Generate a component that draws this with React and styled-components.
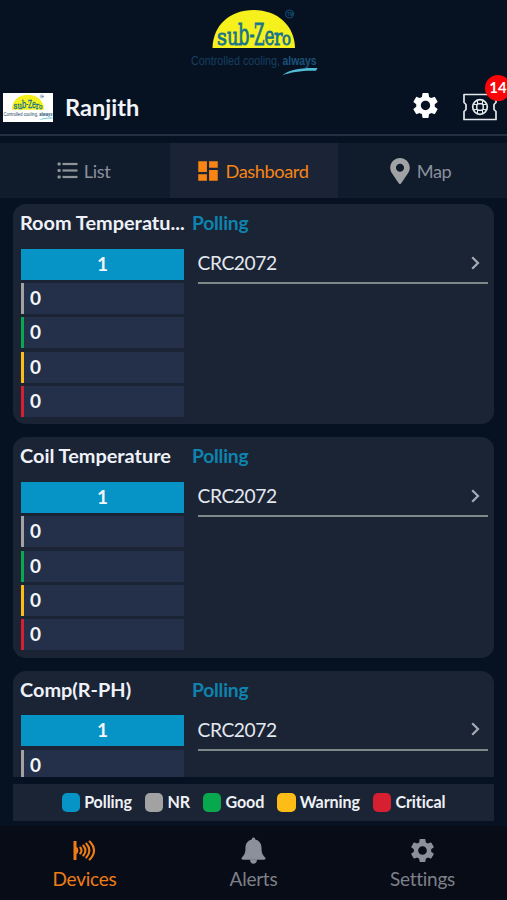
import React from 'react';
import styled, { createGlobalStyle } from 'styled-components';
import { MdSettings, MdDashboard } from 'react-icons/md';
import { FaMapMarkerAlt } from 'react-icons/fa';

const GlobalStyle = createGlobalStyle`
  * {
    box-sizing: border-box;
  }
  body {
    margin: 0;
    background: #061222;
    font-family: 'Lato', sans-serif;
    font-variant-ligatures: none;
  }
`

const Screen = styled.div`
  width: 100%;
  height: 900px;
  display: flex;
  flex-direction: column;
  overflow: hidden;
  background: #061222;
`

const BrandBar = styled.div`
  height: 79px;
  padding: 8px 0 0 190px;
`

const Header = styled.header`
  height: 57px;
  display: flex;
  align-items: center;
  padding: 1px 9px 0 3px;
  border-bottom: 2px solid #233041;
`

const Thumb = styled.div`
  width: 50px;
  height: 29px;
  padding-top: 1px;
  background: #ffffff;
`

const UserName = styled.div`
  flex: 1;
  margin-left: 12px;
  font-size: 23.6px;
  font-weight: 700;
  line-height: 28px;
  color: #f1f4f8;
`

const HeaderGear = styled(MdSettings)`
  width: 31px;
  height: 31px;
  margin: -3px 21px 0 0;
  color: #ffffff;
`

const TicketButton = styled.div`
  position: relative;
  width: 36px;
  height: 28px;
`

const Badge = styled.div`
  position: absolute;
  top: -18px;
  left: 23px;
  width: 26px;
  height: 26px;
  border-radius: 50%;
  background: #fb0509;
  color: #ffffff;
  font-size: 15px;
  font-weight: 700;
  line-height: 25px;
  text-align: center;
`

const Tabs = styled.div`
  display: grid;
  grid-template-columns: 170px 168px 1fr;
  height: 55px;
  margin-top: 7px;
  background: #101b2b;
`

const Tab = styled.div`
  display: flex;
  align-items: center;
  justify-content: center;
  gap: ${props => props.$gap || 6}px;
  padding-right: ${props => props.$shift || 0}px;
  font-size: 18.2px;
  letter-spacing: -0.4px;
  color: ${props => (props.$active ? '#f88513' : '#8b909b')};
  background: ${props => (props.$active ? '#1a2436' : 'transparent')};
`

const CardList = styled.div`
  height: 573px;
  margin-top: 6px;
  padding: 0 13px;
  display: flex;
  flex-direction: column;
  gap: 13px;
  overflow: hidden;
`

const Card = styled.section`
  flex: none;
  height: 220.3px;
  display: grid;
  grid-template-columns: 163px 1fr;
  column-gap: 9px;
  padding: 6px 6px 0 8px;
  border-radius: 13px;
  background: #1b2435;
`

const Title = styled.div`
  height: 26px;
  margin-left: -1px;
  font-size: 19.9px;
  font-weight: 700;
  line-height: 25px;
  white-space: nowrap;
  color: #eef2f8;
`

const GroupName = styled(Title)`
  font-size: 19.2px;
  letter-spacing: -0.2px;
  color: #0d83ae;
`

const Rows = styled.div`
  display: grid;
  grid-auto-rows: 31px;
  row-gap: 3.3px;
  margin-top: 12.8px;
`

const Row = styled.div`
  padding-left: ${props => (props.$main ? 0 : '6px')};
  border-left: ${props => (props.$main ? 'none' : `3px solid ${props.$color}`)};
  background: ${props => (props.$main ? props.$color : '#243049')};
  color: #f3f6fa;
  font-size: 19px;
  font-weight: 700;
  line-height: 30.4px;
  text-align: ${props => (props.$main ? 'center' : 'left')};
`

const Device = styled.div`
  height: 41px;
  margin: 7px 0 0 4.5px;
  padding: 0 8px 0 0;
  display: flex;
  align-items: center;
  justify-content: space-between;
  border-bottom: 2px solid #7d8889;
  color: #e3e8ee;
  font-size: 19.2px;
  letter-spacing: -0.4px;
`

const Legend = styled.div`
  height: 37px;
  margin: 7px 13px 0;
  padding-bottom: 1px;
  display: flex;
  align-items: center;
  justify-content: center;
  gap: 13px;
  background: #1b2435;
`

const LegendItem = styled.div`
  display: flex;
  align-items: center;
  gap: 4px;
  font-size: 16.1px;
  line-height: 18px;
  font-weight: 700;
  letter-spacing: -0.1px;
  color: #eef2f7;
`

const Swatch = styled.span`
  width: 18.5px;
  height: 19px;
  border-radius: 5px;
  background: ${props => props.$color};
`

const BottomNav = styled.nav`
  flex: 1;
  margin-top: 5px;
  display: grid;
  grid-template-columns: repeat(3, 1fr);
  background: #080c16;
`

const NavItem = styled.div`
  display: flex;
  flex-direction: column;
  align-items: center;
  padding-top: 8px;
  font-size: 19px;
  letter-spacing: -0.25px;
  color: ${props => (props.$active ? '#ee7d17' : '#7d8089')};
`

const NavIcon = styled.div`
  height: 33px;
  display: flex;
  align-items: center;
  color: ${props => (props.$active ? '#ee7d17' : '#8b909b')};
`

const NavLabel = styled.div`
  line-height: 24px;
`

const LogoSvg = styled.svg`
  display: block;
  overflow: visible;
`

const wordmark = [
  { char: 's', x: 27, y: 37.3, size: 22, width: 10 },
  { char: 'u', x: 37, y: 37.3, size: 25, width: 11.5 },
  { char: 'b', x: 48, y: 36.5, size: 29, width: 11.5 },
  { char: '-', x: 59.5, y: 35, size: 28, width: 5 },
  { char: 'Z', x: 64, y: 36.5, size: 30, width: 10.5 },
  { char: 'e', x: 74.5, y: 37, size: 26, width: 10 },
  { char: 'r', x: 84, y: 37.3, size: 22, width: 8.5 },
  { char: 'o', x: 92, y: 37.3, size: 19, width: 9 },
];

const Logo = ({ width }) => (
  <LogoSvg width={width} viewBox="0 0 128 70">
    <path d="M22.5 40C23 17 40 2 63.500 2S104.500 17 105 40Z" fill="#f6f01c" />
    <g fill="#16748a" stroke="#16748a" strokeWidth="0.800" fontFamily="'DejaVu Serif', serif">
      {wordmark.map(l => (
        <text key={l.char} x={l.x} y={l.y} fontSize={l.size} textLength={l.width} lengthAdjust="spacingAndGlyphs">{l.char}</text>
      ))}
    </g>
    <circle cx="99.500" cy="6" r="4" fill="none" stroke="#12507a" strokeWidth="1" />
    <text x="97" y="7.800" fontSize="4.500" fontFamily="'Liberation Sans', sans-serif" fontWeight="700" fill="#12507a">TM</text>
    <g fill="#173f60" fontFamily="'Liberation Sans', sans-serif" fontSize="12.500">
      <text x="1" y="57" textLength="89" lengthAdjust="spacingAndGlyphs">Controlled cooling,</text>
      <text x="92.500" y="57" fontWeight="700" textLength="34" lengthAdjust="spacingAndGlyphs" fill="#1a5179">always</text>
    </g>
    <path d="M92 67.500C99 61.500 111 59.500 127.500 60L126 62.800C112 62.500 101 64 92 67.500Z" fill="#52bcd6" />
  </LogoSvg>
);

const ListIcon = () => (
  <svg width="21" height="18" viewBox="0 0 21 18" fill="#8f9498">
    {[2, 8.5, 15].map(y => (
      <g key={y}>
        <rect x="0.500" y={y - 1.6} width="3.200" height="3.200" rx="1" />
        <rect x="5.500" y={y - 1.1} width="15" height="2.200" />
      </g>
    ))}
  </svg>
);

const TicketIcon = () => (
  <svg width="36" height="28" viewBox="0 0 36 28" fill="none" stroke="#e4e7ec" strokeWidth="1.700">
    <path d="M2 1.500H34V9.500L32 11.500V16.500L34 18.500V26.500H2V18.500L4 16.500V11.500L2 9.500Z" strokeLinejoin="round" />
    <circle cx="18" cy="14" r="7.300" />
    <rect x="14.800" y="10.800" width="6.400" height="6.400" rx="2" strokeWidth="1.500" />
    <path d="M15.500 7.200V11.200M20.500 7.200V11.200M15.500 16.800V20.800M20.500 16.800V20.800M11.200 11.500H15.200M11.200 16.500H15.200M20.800 11.500H24.800M20.800 16.500H24.800" strokeWidth="1.100" />
  </svg>
);

const Chevron = () => (
  <svg width="9" height="14" viewBox="0 0 9 14" fill="none" stroke="#a5acb5" strokeWidth="2.200">
    <path d="M1.200 1.200L7 7L1.200 12.800" />
  </svg>
);

const DevicesIcon = () => (
  <svg width="23" height="21" viewBox="0 0 23 21" fill="none" stroke="#ee7d17" strokeWidth="2.100" strokeLinecap="round">
    <path d="M0.500 1H3.500V7C6 8 6 13 3.500 14V20H0.500Z" fill="#ee7d17" stroke="none" />
    <path d="M7.300 7.500Q9.700 10.500 7.300 13.500M10.300 5.500Q14.600 10.500 10.300 15.500M13.300 3.500Q19.500 10.500 13.300 17.500M16.700 1.500Q25.300 10.500 16.700 19.500" />
  </svg>
);

const BellIcon = () => (
  <svg width="25" height="27" viewBox="0 0 25 27" fill="#8b909b">
    <path d="M12.500 0.500C11.300 0.500 10.800 1.300 10.800 2.400C6.800 3.300 4.500 6.500 4.500 10.500C4.500 16 3.300 18 1 20.300C0 21.500 0.500 22.700 2 22.700H23C24.500 22.700 25 21.500 24 20.300C21.700 18 20.500 16 20.500 10.500C20.500 6.500 18.200 3.300 14.200 2.400C14.200 1.300 13.700 0.500 12.500 0.500Z" />
    <path d="M9 22.500H16C16 25.300 14.500 26.700 12.500 26.700S9 25.300 9 22.500Z" />
  </svg>
);

const statuses = [
  { name: 'Polling', color: '#0693c5', count: 1 },
  { name: 'NR', color: '#a2a2a2', count: 0 },
  { name: 'Good', color: '#07a84e', count: 0 },
  { name: 'Warning', color: '#fdbd16', count: 0 },
  { name: 'Critical', color: '#d61f30', count: 0 },
];

const cards = ['Room Temperatu...', 'Coil Temperature', 'Comp(R-PH)'];

const StatusCard = ({ title }) => (
  <Card>
    <div>
      <Title>{title}</Title>
      <Rows>
        {statuses.map((s, i) => (
          <Row key={s.name} $color={s.color} $main={i === 0}>{s.count}</Row>
        ))}
      </Rows>
    </div>
    <div>
      <GroupName>Polling</GroupName>
      <Device>
        CRC2072
        <Chevron />
      </Device>
    </div>
  </Card>
);

export default function App() {
  return (
    <Screen>
      <GlobalStyle />
      <BrandBar>
        <Logo width={128} />
      </BrandBar>
      <Header>
        <Thumb>
          <Logo width={50} />
        </Thumb>
        <UserName>Ranjith</UserName>
        <HeaderGear />
        <TicketButton>
          <TicketIcon />
          <Badge>14</Badge>
        </TicketButton>
      </Header>
      <Tabs>
        <Tab $shift={3}>
          <ListIcon />
          List
        </Tab>
        <Tab $active $gap={4} $shift={4}>
          <MdDashboard size={26} />
          Dashboard
        </Tab>
        <Tab $gap={4} $shift={7}>
          <FaMapMarkerAlt size={26} width={20} color="#a0a3a5" />
          Map
        </Tab>
      </Tabs>
      <CardList>
        {cards.map(title => <StatusCard key={title} title={title} />)}
      </CardList>
      <Legend>
        {statuses.map(s => (
          <LegendItem key={s.name}>
            <Swatch $color={s.color} />
            {s.name}
          </LegendItem>
        ))}
      </Legend>
      <BottomNav>
        <NavItem $active>
          <NavIcon $active><DevicesIcon /></NavIcon>
          <NavLabel>Devices</NavLabel>
        </NavItem>
        <NavItem>
          <NavIcon><BellIcon /></NavIcon>
          <NavLabel>Alerts</NavLabel>
        </NavItem>
        <NavItem>
          <NavIcon><MdSettings size={29} /></NavIcon>
          <NavLabel>Settings</NavLabel>
        </NavItem>
      </BottomNav>
    </Screen>
  );
}
